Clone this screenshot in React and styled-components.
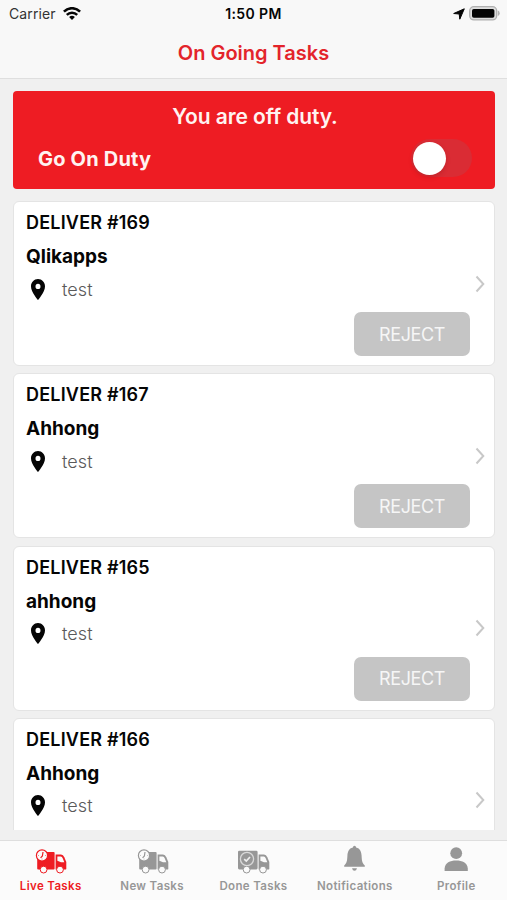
import React, { useState } from 'react';
import styled, { createGlobalStyle } from 'styled-components';

const colors = {
  red: '#ee1c23',
  page: '#f0f0f0',
  bar: '#f8f8f8',
  line: '#e4e4e4',
  grey: '#979797',
  button: '#c5c5c5',
};

const GlobalStyle = createGlobalStyle`
  * {
    box-sizing: border-box;
  }

  body {
    margin: 0;
    background: ${colors.page};
    font-family: Inter, 'Liberation Sans', sans-serif;
    color: #050505;
  }

  button {
    font-family: inherit;
    border: 0;
    padding: 0;
    background: none;
  }
`;

const Screen = styled.div`
  display: flex;
  flex-direction: column;
  height: 900px;
  overflow: hidden;
`;

const Header = styled.header`
  height: 79px;
  flex-shrink: 0;
  background: ${colors.bar};
  border-bottom: 1px solid #dfdfdf;
`;

const StatusBar = styled.div`
  display: grid;
  grid-template-columns: 1fr auto 1fr;
  align-items: center;
  height: 27px;
  padding: 0 7px 0 9px;
  font-size: 14px;
`;

const Carrier = styled.div`
  display: flex;
  align-items: center;
  gap: 7px;
  color: #333;
  letter-spacing: 0.1px;
`;

const Clock = styled.div`
  margin-right: 2px;
  font-weight: 600;
  letter-spacing: 0.4px;
`;

const StatusIcons = styled.div`
  display: flex;
  justify-content: flex-end;
  align-items: center;
  gap: 4px;
`;

const Title = styled.h1`
  margin: 0;
  font-size: 20px;
  font-weight: 600;
  line-height: 52px;
  text-align: center;
  color: #e3242b;
`;

const Content = styled.main`
  height: 751px;
  flex-shrink: 0;
  overflow: hidden;
  padding: 12px 12px 0 13px;
`;

const DutyPanel = styled.section`
  height: 98px;
  padding: 12px 23px 0 25px;
  border-radius: 4px;
  background: ${colors.red};
  color: #fff3f1;
`;

const DutyStatus = styled.div`
  font-size: 21px;
  font-weight: 600;
  line-height: 28px;
  letter-spacing: -0.1px;
  text-align: center;
`;

const DutyRow = styled.div`
  display: flex;
  align-items: center;
  justify-content: space-between;
  height: 38px;
  margin-top: 8px;
  font-size: 20px;
  font-weight: 700;
  line-height: 26px;
  letter-spacing: 0.2px;
`;

const DutyLabel = styled.span`
  padding-top: 2px;
`;

const Toggle = styled.button`
  display: flex;
  align-items: center;
  justify-content: ${({ $on }) => ($on ? 'flex-end' : 'flex-start')};
  width: 61px;
  height: 38px;
  padding: 0 2px;
  border-radius: 19px;
  background: ${({ $on }) => ($on ? '#4cd964' : '#da2c34')};
`;

const Knob = styled.span`
  width: 33px;
  height: 33px;
  border-radius: 50%;
  background: #fff;
  box-shadow: 0 2px 5px rgba(90, 0, 0, 0.2);
`;

const TaskList = styled.div`
  display: flex;
  flex-direction: column;
  gap: 7.3px;
  margin-top: 12px;
`;

const Card = styled.article`
  display: flex;
  align-items: center;
  justify-content: space-between;
  flex-shrink: 0;
  height: 165px;
  padding: 0 9px 0 12px;
  border: 1px solid ${colors.line};
  border-radius: 6px;
  background: #fff;
`;

const CardBody = styled.div`
  display: flex;
  flex-direction: column;
  align-self: stretch;
  flex: 1;
  padding-top: 9px;
`;

const TaskCode = styled.div`
  font-size: 18px;
  font-weight: 600;
  line-height: 24px;
  letter-spacing: 0.2px;
`;

const Customer = styled.div`
  margin-top: 9px;
  font-size: 19px;
  font-weight: 700;
  line-height: 26px;
`;

const Address = styled.div`
  display: flex;
  align-items: center;
  gap: 12px;
  height: 24px;
  margin-top: 7px;
  font-size: 18px;
  font-weight: 300;
  letter-spacing: 0.1px;
  color: #5a5a5a;
`;

const RejectButton = styled.button`
  align-self: flex-end;
  width: 116px;
  height: 44px;
  margin: 11px 5px 0 0;
  border-radius: 7px;
  background: ${colors.button};
  color: #f6f6f6;
  font-size: 18px;
  letter-spacing: -0.4px;
`;

const TabBar = styled.nav`
  display: grid;
  grid-template-columns: repeat(5, 1fr);
  height: 60px;
  margin-top: 10px;
  flex-shrink: 0;
  border-top: 1px solid #dedede;
  background: #fbfbfb;
`;

const Tab = styled.button`
  display: flex;
  flex-direction: column;
  align-items: center;
  padding-top: 4px;
  color: ${({ $active }) => ($active ? colors.red : colors.grey)};
  font-size: 11.5px;
  font-weight: 600;
  letter-spacing: 0.35px;
  white-space: nowrap;

  svg {
    display: block;
  }
`;

const TabLabel = styled.span`
  line-height: 16px;
  margin-top: 3px;
`;

const WifiIcon = () => (
  <svg width="18" height="14" viewBox="0 0 18 14" fill="none" stroke="#050505">
    <path d="M0.9 4.6C5.5 0.1 12.5 0.1 17.1 4.6" strokeWidth="2.6" />
    <path d="M3.8 7.9C6.7 5 11.3 5 14.2 7.9" strokeWidth="2.4" />
    <path d="M9 13L6.1 10.1Q9 7.5 11.9 10.1Z" fill="#050505" stroke="none" />
  </svg>
);

const LocationIcon = () => (
  <svg width="12" height="12" viewBox="0 0 12 12">
    <path d="M11.3 0.8L6.8 11.2L6.2 6L0.7 5.5Z" fill="#050505" stroke="#050505" strokeLinejoin="round" />
  </svg>
);

const BatteryIcon = () => (
  <svg width="31" height="15" viewBox="0 0 31 15">
    <rect x="0.7" y="0.7" width="27" height="13.2" rx="4.2" fill="#dedede" stroke="#b0b0b0" strokeWidth="1.3" />
    <rect x="3" y="3" width="22.4" height="8.8" rx="1.8" fill="#050505" />
    <path d="M28.9 4.6Q30.7 5.4 30.7 7.3T28.9 10Z" fill="#b3b3b3" />
  </svg>
);

const PinIcon = () => (
  <svg width="24" height="25" viewBox="0 0 24 24" preserveAspectRatio="none">
    <path
      d="M12 2C8.13 2 5 5.13 5 9c0 5.25 7 13 7 13s7-7.75 7-13c0-3.87-3.13-7-7-7zm0 9.5a2.5 2.5 0 0 1 0-5 2.5 2.5 0 0 1 0 5z"
      fill="#050505"
    />
  </svg>
);

const ChevronIcon = () => (
  <svg width="10" height="18" viewBox="0 0 10 18" fill="none">
    <path d="M1.5 1.5L8.3 9L1.5 16.5" stroke="#c8c8c8" strokeWidth="2" />
  </svg>
);

// cab and wheels shared by the three delivery tabs
const TruckBase = () => (
  <>
    <path d="M21.6 9.6H27Q29.2 9.6 30.3 12.2L32.3 17V23.8Q32.3 24.4 31.7 24.4H21.6Z" fill="currentColor" />
    <path d="M23.4 11.6H26.7Q28.1 11.6 28.8 13.4L30.3 17.3H27L23.4 15.8Z" fill="#fbfbfb" />
    <g fill="#fbfbfb" stroke="currentColor" strokeWidth="1">
      <circle cx="9.6" cy="24.6" r="3.4" />
      <circle cx="26" cy="24.6" r="3.4" />
    </g>
  </>
);

const TruckClockIcon = () => (
  <svg width="33" height="30" viewBox="0 0 33 30">
    <rect x="3.2" y="7" width="17.4" height="17.4" rx="1" fill="currentColor" />
    <TruckBase />
    <circle cx="8" cy="10.5" r="5.6" fill="#fbfbfb" stroke="currentColor" strokeWidth="1.2" />
    <path d="M9 7L8.4 11L6.6 12.8" fill="none" stroke="currentColor" strokeWidth="1.2" />
    <path d="M4 10.5H4.9M11.2 10.5H12.1M8 14.5V13.6" stroke="currentColor" strokeWidth="0.6" />
  </svg>
);

const TruckCheckIcon = () => (
  <svg width="33" height="30" viewBox="0 0 33 30">
    <rect x="1" y="5.8" width="19.6" height="18.6" rx="1.3" fill="currentColor" />
    <TruckBase />
    <circle cx="10" cy="14" r="6.6" fill="none" stroke="#d9d9d9" strokeWidth="1.3" />
    <path d="M7.2 14.2L9.3 16.1L13 12" fill="none" stroke="#eeeeee" strokeWidth="1.7" />
  </svg>
);

const BellIcon = () => (
  <svg width="33" height="30" viewBox="0 0 33 30" fill="currentColor">
    <path d="M16.5 0.8Q18 0.8 18.1 2.4C22.2 3.3 23.4 6.6 23.6 10.8C23.8 15.3 24 18 26.8 20.5V21.8H6.2V20.5C9 18 9.2 15.3 9.4 10.8C9.6 6.6 10.8 3.3 14.9 2.4Q15 0.8 16.5 0.8Z" />
    <path d="M14 23.3H19Q18.4 25.8 16.5 25.8T14 23.3Z" />
  </svg>
);

const PersonIcon = () => (
  <svg width="33" height="30" viewBox="0 0 33 30" fill="currentColor">
    <circle cx="16.2" cy="8.2" r="5.9" />
    <path d="M4.6 26V23.4C5 17.9 10.1 15.6 16.2 15.6S27.4 17.9 27.8 23.4V26Z" />
  </svg>
);

const tasks = [
  { code: 'DELIVER #169', customer: 'Qlikapps', address: 'test', canReject: true },
  { code: 'DELIVER #167', customer: 'Ahhong', address: 'test', canReject: true },
  { code: 'DELIVER #165', customer: 'ahhong', address: 'test', canReject: true },
  { code: 'DELIVER #166', customer: 'Ahhong', address: 'test', canReject: false },
];

const tabs = [
  { label: 'Live Tasks', Icon: TruckClockIcon },
  { label: 'New Tasks', Icon: TruckClockIcon },
  { label: 'Done Tasks', Icon: TruckCheckIcon },
  { label: 'Notifications', Icon: BellIcon },
  { label: 'Profile', Icon: PersonIcon },
];

const TaskCard = ({ task }) => (
  <Card>
    <CardBody>
      <TaskCode>{task.code}</TaskCode>
      <Customer>{task.customer}</Customer>
      <Address>
        <PinIcon />
        {task.address}
      </Address>
      {task.canReject && <RejectButton>REJECT</RejectButton>}
    </CardBody>
    <ChevronIcon />
  </Card>
);

const App = () => {
  const [onDuty, setOnDuty] = useState(false);
  const [activeTab, setActiveTab] = useState('Live Tasks');

  return (
    <Screen>
      <GlobalStyle />
      <Header>
        <StatusBar>
          <Carrier>
            Carrier
            <WifiIcon />
          </Carrier>
          <Clock>1:50 PM</Clock>
          <StatusIcons>
            <LocationIcon />
            <BatteryIcon />
          </StatusIcons>
        </StatusBar>
        <Title>On Going Tasks</Title>
      </Header>

      <Content>
        <DutyPanel>
          <DutyStatus>You are {onDuty ? 'on' : 'off'} duty.</DutyStatus>
          <DutyRow>
            <DutyLabel>{onDuty ? 'Go Off Duty' : 'Go On Duty'}</DutyLabel>
            <Toggle $on={onDuty} onClick={() => setOnDuty(!onDuty)} aria-label="Duty">
              <Knob />
            </Toggle>
          </DutyRow>
        </DutyPanel>
        <TaskList>
          {tasks.map(task => (
            <TaskCard key={task.code} task={task} />
          ))}
        </TaskList>
      </Content>

      <TabBar>
        {tabs.map(({ label, Icon }) => (
          <Tab key={label} $active={label === activeTab} onClick={() => setActiveTab(label)}>
            <Icon />
            <TabLabel>{label}</TabLabel>
          </Tab>
        ))}
      </TabBar>
    </Screen>
  );
};

export default App;
